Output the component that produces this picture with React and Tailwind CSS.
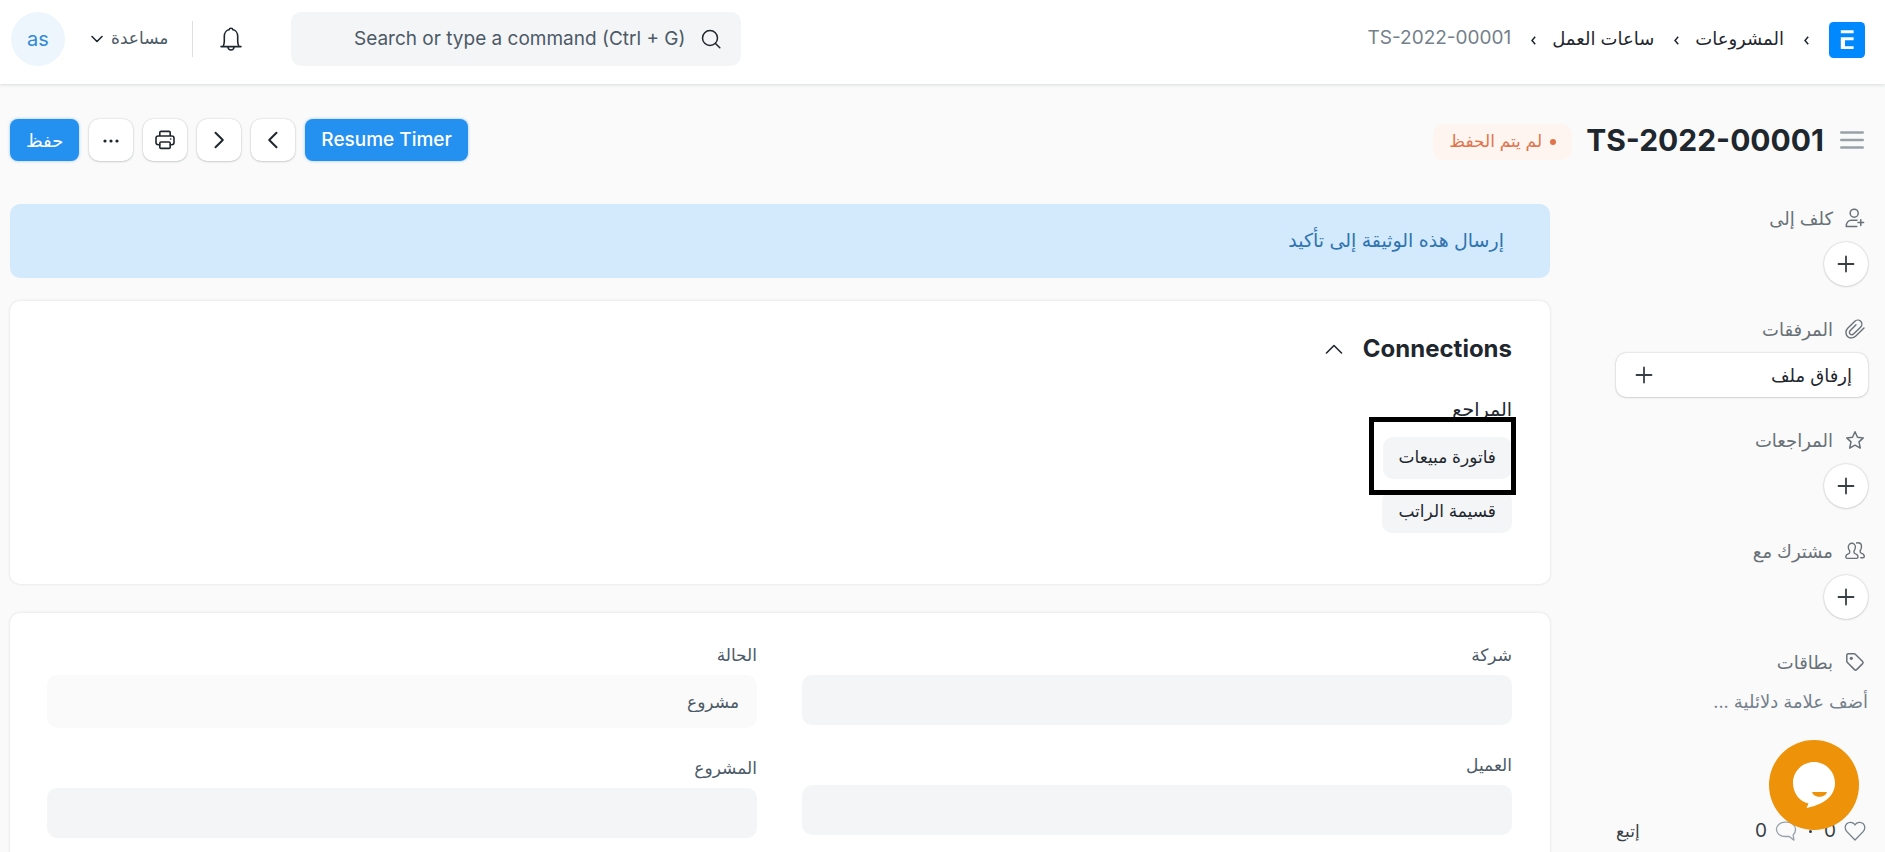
import { clsx } from "clsx";

const Icon = ({ size = 20, box = 16, stroke = 1, className, children }) => (
  <svg
    width={size}
    height={size}
    viewBox={`0 0 ${box} ${box}`}
    fill="none"
    stroke="currentColor"
    strokeWidth={stroke}
    strokeLinecap="round"
    strokeLinejoin="round"
    aria-hidden="true"
    className={clsx("shrink-0", className)}
  >
    {children}
  </svg>
);

const PlusIcon = () => (
  <Icon size={20} box={20} stroke={1.8} className="text-[#383f45]">
    <path d="M10 2.5v15M2.5 10h15" />
  </Icon>
);

const AssignIcon = () => (
  <Icon size={20} box={20} stroke={1.5}>
    <circle cx="9.2" cy="5.2" r="4" />
    <path d="M12 12.2H6.4C3.4 12.2 1.2 14.8 1.2 18.6h10.6M15.8 11.8v5.6M13 14.6h5.6" />
  </Icon>
);

const AttachmentIcon = () => (
  <Icon size={20} box={20} stroke={1.4}>
    <path d="M19 9l-8.2 8c-2.400 2.400-6.100 2.600-8.300.4s-2.100-5.900.2-8.200l6.900-6.700c1.700-1.700 4.500-1.900 6.100-.3s1.500 4.300-.2 6l-6.700 6.600c-1.100 1.100-2.700 1.200-3.700.3s-.9-2.600.2-3.700l5.700-5.600" />
  </Icon>
);

const StarIcon = () => (
  <Icon size={20} box={20} stroke={1.5}>
    <path d="M10 1.800l2.500 5.400 5.800.7-4.300 4 1.300 6.200L10 15.200l-5.300 2.900L6 11.900l-4.300-4 5.800-.7z" />
  </Icon>
);

const UsersIcon = () => (
  <Icon size={20} box={20} stroke={1.4}>
    <path d="M6.900 2.300c2 0 3.500 1.600 3.500 3.700 0 1.500-.5 3-1.400 3.900v1.400c0 .7.4 1.100 1.100 1.400 1.900.6 2.900 1.500 2.900 3.300 0 .9-.5 1.400-1.400 1.400H2.200c-.9 0-1.400-.5-1.400-1.400 0-1.800 1-2.700 2.900-3.300.6-.3 1-.7 1-1.400V9.900C3.800 9 3.300 7.500 3.300 6c0-2.100 1.500-3.700 3.600-3.700z" />
    <path d="M11.600 2c.4-.2.9-.3 1.400-.3 2.100 0 3.500 1.600 3.500 3.700 0 1.500-.4 3-1.300 3.900v1.400c0 .7.4 1.100 1 1.400 2 .6 3.100 1.500 3.100 3.300 0 .9-.5 1.400-1.500 1.400h-2" />
  </Icon>
);

const TagIcon = () => (
  <Icon size={20} box={20} stroke={1.5}>
    <path d="M1.800 3.300c0-.9.6-1.500 1.500-1.500h6c.4 0 .7.1 1 .4l7.300 7.300c.6.6.6 1.500 0 2.100l-6 6c-.6.6-1.500.6-2.100 0L2.200 10.300c-.3-.3-.4-.6-.4-1z" />
    <circle cx="6.300" cy="6.300" r="1.600" fill="currentColor" stroke="none" />
  </Icon>
);

const BREADCRUMBS = ["المشروعات", "ساعات العمل"];

const COLUMNS = [
  [
    { id: "company", label: "شركة" },
    { id: "customer", label: "العميل" },
  ],
  [
    { id: "status", label: "الحالة", value: "مشروع", readOnly: true },
    { id: "project", label: "المشروع" },
  ],
];

const CrumbArrow = () => (
  <svg width="5" height="9" viewBox="0 0 5 9" fill="none" stroke="#1f272e" strokeWidth="1.5" className="mt-1 shrink-0">
    <path d="M4.200.8L1 4.500l3.200 3.700" />
  </svg>
);

const Navbar = () => (
  <header className="flex items-center h-[84px] shrink-0 bg-white pr-5 pl-[11px] shadow-[0_1px_3px_rgba(25,39,52,0.15)] z-10">
    <nav className="flex items-center text-[#1f272e]" aria-label="breadcrumb">
      <a href="#home" aria-label="Home" className="ml-5 -mt-1">
        <svg width="36" height="36" viewBox="0 0 36 36">
          <rect width="36" height="36" rx="4.500" fill="#0089ff" />
          <path d="M11.800 8.300h12.800v2.900H11.800zM11.800 15.300h12.800v2.900h-8.600v6.100h8.600v2.800H11.800z" fill="#fff" />
        </svg>
      </a>
      <ul className="flex items-center -mt-2">
        {BREADCRUMBS.map((crumb) => (
          <li key={crumb} className="flex items-center">
            <CrumbArrow />
            <a href="#list" className="mr-5 ml-4 text-[18px]">{crumb}</a>
          </li>
        ))}
        <li className="flex items-center">
          <CrumbArrow />
          <a href="#doc" className="mr-5 text-[19px] text-[#74808b]">TS-2022-00001</a>
        </li>
      </ul>
    </nav>

    <div className="flex items-center mr-auto -mt-1.5">
      <label className="flex items-center gap-4 w-[450px] h-[54px] px-5 ml-12 rounded-[10px] bg-[#f4f5f6] text-[#4c5a67]">
        <Icon size={20} box={20} stroke={1.5} className="text-[#1f272e]">
          <circle cx="9" cy="9" r="7.500" />
          <path d="M14.500 14.500l4.300 4.300" />
        </Icon>
        <input
          type="text"
          dir="ltr"
          aria-label="Search"
          placeholder="Search or type a command (Ctrl + G)"
          className="flex-1 min-w-0 bg-transparent text-right text-[19px] outline-none placeholder:text-[#4c5a67]"
        />
      </label>
      <button type="button" aria-label="Notifications" className="text-[#1f272e]">
        <Icon size={24} box={24} stroke={1.6}>
          <path d="M2 19.600h20M4 19.600c1-1.800 1.300-3.300 1.300-5V9.300C5.300 5.800 7.500 3.200 10 2.800c.2-1 1-1.600 2-1.600s1.800.6 2 1.600c2.500.4 4.700 3 4.700 6.500v5.300c0 1.700.3 3.200 1.300 5M8.800 20c.3 1.900 1.600 3 3.200 3s2.900-1.100 3.200-3" />
        </Icon>
      </button>
      <div className="w-px h-9 mr-[26px] ml-6 bg-[#dcdfe2]" />
      <button type="button" className="flex items-center gap-2 text-[17px] text-[#4c5a67]">
        مساعدة
        <Icon size={12} box={12} stroke={1.6} className="text-[#1f272e]">
          <path d="M1 3.500l5 5 5-5" />
        </Icon>
      </button>
      <button type="button" className="flex items-center justify-center w-[54px] h-[54px] mr-[26px] rounded-full bg-[#edf6fd] text-[#318ad8] text-xl">
        as
      </button>
    </div>
  </header>
);

const ToolButton = ({ label, children }) => (
  <button
    type="button"
    aria-label={label}
    className="flex items-center justify-center w-11 h-[42px] rounded-[10px] bg-white text-[#1f272e] shadow-[0_0_2px_rgba(0,0,0,0.2),0_1px_2px_rgba(25,39,52,0.15)]"
  >
    {children}
  </button>
);

const PageHead = () => (
  <div className="flex items-center pr-[21px] pl-[10px] pt-[35px]">
    <button type="button" aria-label="Toggle sidebar" className="text-[#98a1a9]">
      <Icon size={24} box={24} stroke={2.4}>
        <path d="M1.200 4.500h21.600M1.200 12h21.600M1.200 19.500h21.600" />
      </Icon>
    </button>
    <h1 className="mr-4 text-[30px] leading-[42px] font-bold text-[#1f272e]">TS-2022-00001</h1>
    <span className="flex items-center gap-2 h-9 px-4 mr-3.5 mt-1 rounded-[10px] bg-[#fff5f0] text-[#e0734c] text-[17px]">
      <span className="w-1.5 h-1.5 rounded-full bg-[#e0734c]" />
      لم يتم الحفظ
    </span>

    <div className="flex items-center gap-[10px] mr-auto">
      <button type="button" className="h-[42px] px-4 rounded-lg bg-[#2490ef] text-white text-[19px] font-medium shadow-[0_0_3px_rgba(36,144,239,0.5)]">
        Resume Timer
      </button>
      <ToolButton label="Previous">
        <Icon size={20} box={20} stroke={2}>
          <path d="M13.500 2.800L6.200 10l7.300 7.200" />
        </Icon>
      </ToolButton>
      <ToolButton label="Next">
        <Icon size={20} box={20} stroke={2}>
          <path d="M6.500 2.800l7.300 7.200-7.300 7.200" />
        </Icon>
      </ToolButton>
      <ToolButton label="Print">
        <Icon size={20} box={20} stroke={1.6}>
          <path d="M4.800 6V2.600c0-.7.5-1.200 1.200-1.200h8c.7 0 1.200.5 1.200 1.200V6M4.600 14.800H3.200c-1.200 0-2.200-1-2.200-2.200V8.200C1 7 2 6 3.200 6h13.600C18 6 19 7 19 8.200v4.400c0 1.200-1 2.200-2.200 2.200h-1.400" />
          <path d="M6 12h8c.7 0 1.200.5 1.200 1.200v4c0 .7-.5 1.200-1.200 1.200H6c-.7 0-1.200-.5-1.200-1.200v-4c0-.7.5-1.200 1.200-1.200z" />
          <path d="M15.600 9h.2" />
        </Icon>
      </ToolButton>
      <ToolButton label="Menu">
        <Icon size={20} box={20}>
          <g fill="currentColor" stroke="none">
            <circle cx="4" cy="11" r="1.600" />
            <circle cx="10" cy="11" r="1.600" />
            <circle cx="16" cy="11" r="1.600" />
          </g>
        </Icon>
      </ToolButton>
      <button type="button" className="h-[42px] px-4 rounded-lg bg-[#2490ef] text-white text-[18px] shadow-[0_0_3px_rgba(36,144,239,0.5)]">
        حفظ
      </button>
    </div>
  </div>
);

const SidebarSection = ({ icon: SectionIcon, label, children }) => (
  <section className="h-[111px]">
    <h2 className="flex items-center gap-3 h-[28px] pr-[3px] text-[18px] text-[#687178]">
      <SectionIcon />
      {label}
    </h2>
    {children}
  </section>
);

const AddButton = ({ label }) => (
  <button
    type="button"
    aria-label={label}
    className="flex items-center justify-center w-11 h-11 mt-[10px] rounded-full bg-white shadow-[0_0_2px_rgba(0,0,0,0.25),0_1px_2px_rgba(25,39,52,0.1)]"
  >
    <PlusIcon />
  </button>
);

const Sidebar = () => (
  <aside className="w-[252px] shrink-0">
    <SidebarSection icon={AssignIcon} label="كلف إلى">
      <AddButton label="كلف إلى" />
    </SidebarSection>
    <SidebarSection icon={AttachmentIcon} label="المرفقات">
      <button
        type="button"
        className="flex items-center justify-between w-full h-11 mt-[10px] pr-4 pl-[18px] rounded-[10px] bg-white text-[18px] text-[#1f272e] shadow-[0_0_2px_rgba(0,0,0,0.25),0_1px_2px_rgba(25,39,52,0.1)]"
      >
        إرفاق ملف
        <PlusIcon />
      </button>
    </SidebarSection>
    <SidebarSection icon={StarIcon} label="المراجعات">
      <AddButton label="المراجعات" />
    </SidebarSection>
    <SidebarSection icon={UsersIcon} label="مشترك مع">
      <AddButton label="مشترك مع" />
    </SidebarSection>
    <SidebarSection icon={TagIcon} label="بطاقات">
      <a href="#tags" className="block mt-3 text-[18px] leading-[28px] text-[#74808b]">أضف علامة دلائلية ...</a>
    </SidebarSection>
    <div className="flex items-center mt-[58px] pr-0.5 text-[#383f45]">
      <button type="button" aria-label="Like" className="flex items-center gap-2 text-[19px]">
        <Icon size={22} box={20} stroke={1.2} className="text-[#74808b]">
          <path d="M10 18.200L2.600 10.600C.6 8.500.6 5.200 2.500 3.400c2-1.900 5.200-1.700 7 .4l.5.7.5-.7c1.800-2.100 5-2.300 7-.4 1.900 1.800 1.900 5.100-.1 7.200z" />
        </Icon>
        <span>0</span>
      </button>
      <span className="mx-3 w-[3px] h-[3px] rounded-full bg-[#383f45]" />
      <button type="button" aria-label="Comments" className="flex items-center gap-2 text-[19px]">
        <Icon size={22} box={20} stroke={1.2} className="text-[#98a1a9]">
          <path d="M9.300 2C4.900 2 1.300 4.800 1.300 8.500S4.900 15 9.300 15h3.600l4.300 3.300-.7-4.700c1.500-1.200 2.200-3 2.200-5.100C18.700 4.800 15.100 2 10.700 2z" />
        </Icon>
        <span>0</span>
      </button>
      <a href="#follow" className="mr-auto text-[17px]">إتبع</a>
    </div>
  </aside>
);

const Pill = ({ children }) => (
  <a href="#link" className="flex items-center h-[42px] px-4 rounded-[10px] bg-[#f4f5f6] text-[17px] text-[#1f272e]">
    {children}
  </a>
);

const Connections = () => (
  <section className="h-[283px] px-[38px] pt-[29px] rounded-[10px] bg-white shadow-[0_0_3px_rgba(25,39,52,0.15)]">
    <button type="button" className="flex items-center gap-5 text-2xl leading-[38px] font-bold text-[#1f272e]">
      Connections
      <Icon size={18} box={18} stroke={1.6}>
        <path d="M1.500 13L9 5.500l7.500 7.500" />
      </Icon>
    </button>
    <h3 className="mt-[26px] text-[19px] leading-[32px] text-[#1f272e]">المراجع</h3>
    <div className="flex flex-col items-start gap-3 mt-[11px]">
      <div className="relative">
        <Pill>فاتورة مبيعات</Pill>
        <div className="absolute -top-5 -bottom-4 -right-1 -left-3.5 border-[5px] border-black z-10 pointer-events-none" />
      </div>
      <Pill>قسيمة الراتب</Pill>
    </div>
  </section>
);

const Field = ({ id, label, value = "", readOnly }) => (
  <div>
    <label htmlFor={id} className="block text-[17px] leading-[28px] text-[#4c5a67]">{label}</label>
    <input
      id={id}
      type="text"
      defaultValue={value}
      readOnly={readOnly}
      className={clsx(
        "block w-full mt-1.5 px-[18px] rounded-[10px] text-[17px] text-[#4c5a67] outline-none",
        readOnly ? "h-[53px] bg-[#fafafa]" : "h-[50px] bg-[#f4f5f6]"
      )}
    />
  </div>
);

const App = () => (
  <div dir="rtl" className="flex flex-col h-screen overflow-hidden bg-[#fafafa] font-['Inter','DejaVu_Sans',sans-serif]">
    <Navbar />
    <PageHead />
    <div className="flex gap-[66px] pr-[17px] pl-[10px] pt-[43px]">
      <Sidebar />
      <main className="flex-1 min-w-0">
        <div className="flex items-center h-[74px] px-[46px] rounded-[10px] bg-[#d3e9fc] text-[19px] text-[#2f74b0]">
          إرسال هذه الوثيقة إلى تأكيد
        </div>
        <div className="mt-[23px]">
          <Connections />
        </div>
        <section className="grid grid-cols-2 gap-[45px] mt-[29px] pr-[38px] pl-[37px] pt-7 pb-10 rounded-[10px] bg-white shadow-[0_0_3px_rgba(25,39,52,0.15)]">
          {COLUMNS.map((fields, i) => (
            <div key={i} className="flex flex-col gap-[26px]">
              {fields.map((field) => (
                <Field key={field.id} {...field} />
              ))}
            </div>
          ))}
        </section>
      </main>
    </div>

    {/* Chat launcher */}
    <button
      type="button"
      aria-label="Chat"
      className="fixed right-[26px] bottom-[22px] flex items-center justify-center w-[90px] h-[90px] rounded-full bg-[#ed9209] z-20"
    >
      <svg width="44" height="48" viewBox="0 0 44 48">
        <path d="M22 1C10.400 1 1 10.400 1 22c0 10.300 6.800 18.600 15.500 20.600L14.500 47C27 44.500 43 38 43 22 43 10.400 33.600 1 22 1z" fill="#fff" />
        <path d="M20 31h15c-.8 3.200-4 4.800-7.500 4.800s-6.700-1.600-7.500-4.800z" fill="#ed9209" />
      </svg>
    </button>
  </div>
);

export default App;
